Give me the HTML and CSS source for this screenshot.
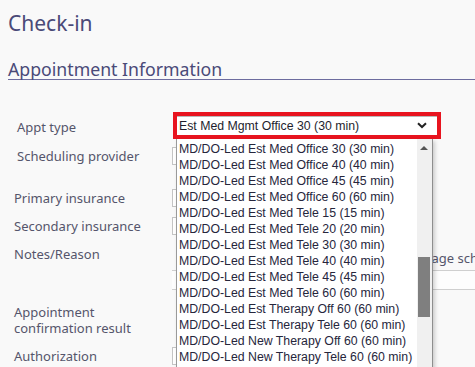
FILE: index.html
```html
<!DOCTYPE html>
<html>
  <head>
    <title>Check-in</title>
    <link rel="stylesheet" href="styles.css">
  </head>
  <body>
    <h1 class="title">Check-in</h1>
    <h2 class="section">Appointment Information</h2>

    <div class="form">
      <div class="row row-appt">
        <label class="lbl indent">Appt type</label>
        <div class="field">
          <div class="picker">
            <div class="picker-value">
              <span>Est Med Mgmt Office 30 (30 min)</span>
              <svg class="chev" width="10" height="7" viewBox="0 0 10 7"><path d="M1 1.2 L5 5 L9 1.2" fill="none" stroke="#222" stroke-width="2"/></svg>
            </div>
          </div>
        </div>
      </div>
      <div class="row row-sched">
        <label class="lbl indent">Scheduling provider</label>
        <div class="field"><div class="box"></div></div>
      </div>
      <div class="row">
        <label class="lbl">Primary insurance</label>
        <div class="field"><div class="box"></div></div>
      </div>
      <div class="row">
        <label class="lbl">Secondary insurance</label>
        <div class="field"><div class="box"></div></div>
      </div>
      <div class="row row-notes">
        <label class="lbl">Notes/Reason</label>
        <div class="field notes">
          <span class="notes-opt">Message scheduler</span>
          <div class="notes-box"></div>
        </div>
      </div>
      <div class="row row-confirm">
        <label class="lbl"><span class="ln">Appointment</span><span class="ln">confirmation result</span></label>
        <div class="field"></div>
      </div>
      <div class="row">
        <label class="lbl">Authorization</label>
        <div class="field"><div class="box"></div></div>
      </div>
    </div>

    <ul class="options">
      <li>MD/DO-Led Est Med Office 30 (30 min)</li>
      <li>MD/DO-Led Est Med Office 40 (40 min)</li>
      <li>MD/DO-Led Est Med Office 45 (45 min)</li>
      <li>MD/DO-Led Est Med Office 60 (60 min)</li>
      <li>MD/DO-Led Est Med Tele 15 (15 min)</li>
      <li>MD/DO-Led Est Med Tele 20 (20 min)</li>
      <li>MD/DO-Led Est Med Tele 30 (30 min)</li>
      <li>MD/DO-Led Est Med Tele 40 (40 min)</li>
      <li>MD/DO-Led Est Med Tele 45 (45 min)</li>
      <li>MD/DO-Led Est Med Tele 60 (60 min)</li>
      <li>MD/DO-Led Est Therapy Off 60 (60 min)</li>
      <li>MD/DO-Led Est Therapy Tele 60 (60 min)</li>
      <li>MD/DO-Led New Therapy Off 60 (60 min)</li>
      <li>MD/DO-Led New Therapy Tele 60 (60 min)</li>
      <li>Neuropsych Evaluation 2 HR (120 min)</li>
      <li class="scroll">
        <span class="arrow"></span>
        <span class="thumb"></span>
      </li>
    </ul>
  </body>
</html>
```

FILE: styles.css
```css
body {
  margin: 0;
  background: #f9f9f9;
  font-family: "Noto Sans", "Open Sans", sans-serif;
  color: #55556b;
  overflow: hidden;
}

.title {
  margin: 0;
  padding: 8px 0 0 8px;
  font-size: 21px;
  font-weight: normal;
  line-height: 30px;
  color: #4a4a78;
}

.section {
  margin: 0;
  padding: 19px 0 0 8px;
  font-size: 17.7px;
  font-weight: normal;
  line-height: 24px;
  color: #4a4a78;
}
.section::after {
  content: "";
  display: block;
  height: 1px;
  margin-top: -2px;
  background: #6d6c9f;
}

.form { padding-top: 32px; }

.row {
  display: flex;
  align-items: center;
  height: 28px;
}
.row-appt { height: 26px; }
.row-sched { height: 30px; margin-top: 3px; margin-bottom: 13px; }
.row-notes { align-items: flex-start; height: 58px; }
.row-confirm { height: 44px; }

.lbl {
  width: 158px;
  padding-left: 14px;
  font-size: 13px;
  line-height: 16px;
  flex-shrink: 0;
}
.lbl .ln { display: block; height: 16px; }
.lbl.indent { padding-left: 17px; width: 155px; }
.row-appt .lbl { padding-top: 4px; }
.row-notes .lbl { padding-top: 6px; }

.field { flex: 1; }

.picker {
  margin-left: 1px;
  width: 260px;
  border: 4px solid #e8141f;
}
.picker-value {
  display: flex;
  align-items: center;
  justify-content: space-between;
  height: 18px;
  padding: 0 10px 0 2px;
  background: #fff;
  border-top: 1px solid #b9b9b9;
  font-family: "Liberation Sans", Arial, sans-serif;
  font-size: 12.3px;
  color: #1e1e2e;
}

.box {
  width: 200px;
  height: 16px;
  border: 1px solid #c4c4c4;
  background: #fff;
}

.notes-opt {
  display: block;
  padding: 10px 0 0 228px;
  font-size: 13px;
  line-height: 16px;
  white-space: nowrap;
}
.notes-box {
  margin-top: 4px;
  height: 18px;
  border-top: 1px solid #cfcfcf;
  border-bottom: 1px solid #cfcfcf;
  background: #fdfdfd;
}

.options {
  position: absolute;
  left: 176px;
  top: 139px;
  width: 240px;
  height: 240px;
  margin: 0;
  padding: 2px 15px 0 0;
  list-style: none;
  background: #fff;
  border-left: 1px solid #9a9a9a;
  border-right: 1px solid #8e8e8e;
  box-shadow: 2px 2px 4px rgba(0, 0, 0, 0.18);
  font-family: "Liberation Sans", Arial, sans-serif;
  font-size: 12.3px;
  line-height: 16px;
  color: #26263c;
  overflow: hidden;
}
.options li { padding-left: 2px; white-space: nowrap; }

.options .scroll {
  position: absolute;
  top: 0;
  right: 0;
  width: 15px;
  height: 100%;
  padding: 0;
  background: #f0f0f0;
}
.arrow {
  position: absolute;
  top: 7px;
  left: 3px;
  border-left: 4px solid transparent;
  border-right: 4px solid transparent;
  border-bottom: 4px solid #555;
}
.thumb {
  position: absolute;
  top: 118px;
  left: 1px;
  width: 12px;
  height: 60px;
  background: #7f7f7f;
}
```
